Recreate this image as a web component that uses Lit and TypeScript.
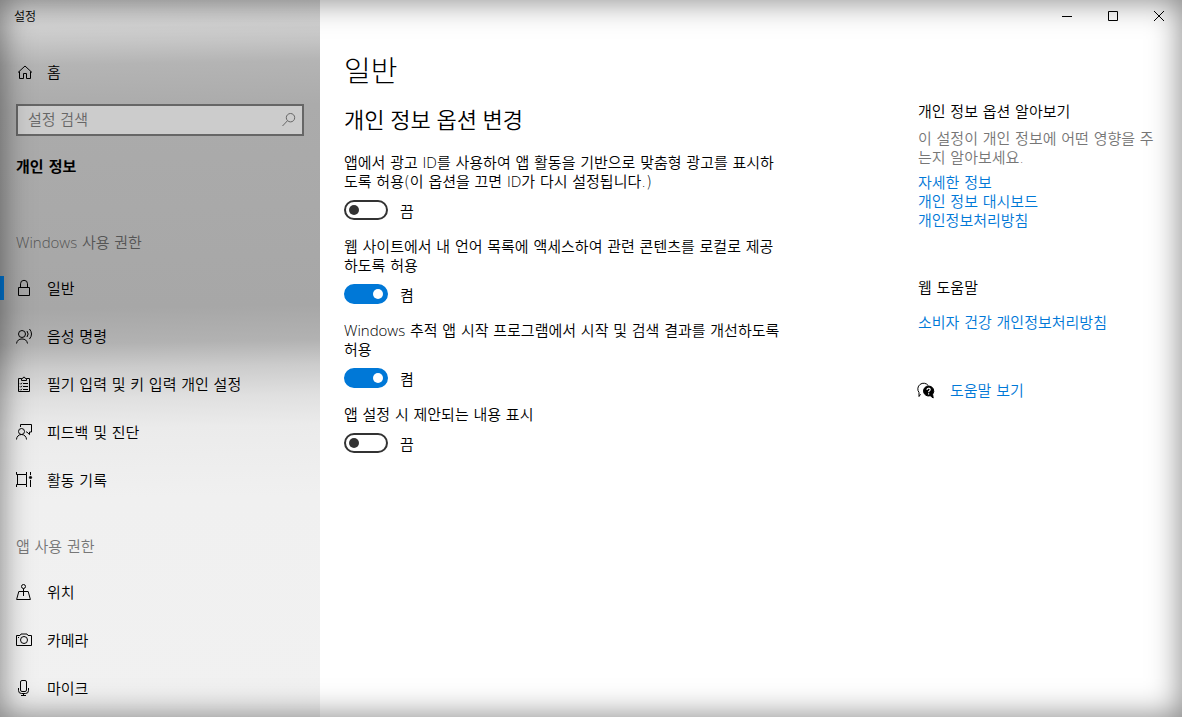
import { LitElement, html, css, svg } from "lit";
import { customElement, property, state } from "lit/decorators.js";

const icons: Record<string, unknown> = {
  home: svg`<path d="M2 8.5 9 2l7 6.5M3.5 7.5v7h4v-5h3v5h4v-7" />`,
  lock: svg`<path d="M2.5 7.5h11v8h-11zM4.5 7.5V3.8a3.5 3.5 0 0 1 7 0v3.7" />`,
  voice: svg`<circle cx="6" cy="6" r="3.5" /><path d="M.5 15.5a5.6 5.6 0 0 1 11 0M11 3a5 5 0 0 1 0 6M13.500 1a8 8 0 0 1 0 10" />`,
  clipboard: svg`<path d="M5.500 2.500h-3v13h11v-13h-3M5.500 4.500v-2h1.200a1.300 1.300 0 0 1 2.600 0h1.200v2zM7 7.500h5M7 10.500h5M7 13.500h5M4 7.500l.7.700L6 6.800M4 10.500l.7.700L6 9.800M4 13.500l.7.700L6 12.800" />`,
  feedback: svg`<circle cx="5.500" cy="7.500" r="3" /><path d="M.5 15.500a5 5 0 0 1 10 0M4.500 3V.5h11v7.500h-2v2.600l-2.600-2.600h-1" />`,
  activity: svg`<path d="M.5 0v2.500h10V0M1.500 2.500v10M10.500 2.500v10M.5 15v-2.500h10V15M14.500 0v3M14.500 8v7" /><circle cx="14.500" cy="5.500" r="1.200" fill="currentColor" stroke-width=".6" />`,
  location: svg`<circle cx="7.500" cy="2.500" r="2" /><path d="M7.500 4.500v7.500M2.800 7.500h9.400l2.200 8H.6z" />`,
  camera: svg`<path d="M.5 3.500H4l1-1.500h6l1 1.500h3.500v10H.5z" /><circle cx="8" cy="8" r="3.500" /><path d="M2 5.500h1" />`,
  mic: svg`<rect x="4.500" y=".5" width="6" height="11" rx="1.500" /><path d="M2.500 8v2.500a3 3 0 0 0 3 3h4a3 3 0 0 0 3-3V8M7.500 13.500v2M5 15.500h5" />`,
  search: svg`<circle cx="10.500" cy="5.700" r="4.200" /><path d="M7.500 8.700 2.500 14" />`,
  help: svg`<path d="M2.500 11.200 1 13.500V9.500A5.500 5.500 0 1 1 10.200 2.500" /><path d="M10.500 3a5 5 0 1 0 1.700 9.700l3 2.300-.6-3.800a5 5 0 0 0-4.100-8.200z" fill="currentColor" /><path d="M9 6.900c0-2.200 3.200-2.200 3.200-.2 0 1.200-1.600 1.200-1.600 2.500M10.600 10.200v1.200" stroke="#fff" stroke-width="1.200" />`,
  minimize: svg`<path d="M3 8.500h10" />`,
  maximize: svg`<path d="M3.500 3.500h9v9h-9z" />`,
  close: svg`<path d="m3 3 10 10M13 3 3 13" />`,
};

@customElement("ui-icon")
class UiIcon extends LitElement {
  @property() name = "";
  static styles = css`
    :host {
      display: block;
      flex: none;
      width: 16px;
      height: 16px;
    }
    .glyph {
      display: block;
      width: 16px;
      height: 16px;
      fill: none;
      stroke: currentColor;
      overflow: visible;
    }
  `;
  render() {
    return html`<svg class="glyph" viewBox="0 0 16 16" aria-hidden="true">${icons[this.name]}</svg>`;
  }
}

@customElement("toggle-option")
class ToggleOption extends LitElement {
  @property({ type: Boolean }) on = false;
  static styles = css`
    :host {
      display: block;
    }
    .caption {
      display: block;
      line-height: 19px;
    }
    .row {
      display: flex;
      align-items: center;
      gap: 12px;
      height: 20px;
      margin-top: 8px;
    }
    .switch {
      appearance: none;
      box-sizing: border-box;
      display: flex;
      align-items: center;
      width: 44px;
      height: 20px;
      margin: 0;
      padding: 0 3px;
      border: 2px solid #333;
      border-radius: 10px;
    }
    .switch::before {
      content: "";
      width: 10px;
      height: 10px;
      border-radius: 50%;
      background: #333;
    }
    .switch:checked {
      justify-content: flex-end;
      border-color: #0078d7;
      background: #0078d7;
    }
    .switch:checked::before {
      background: #fff;
    }
    .state {
      padding-top: 3px;
      line-height: 20px;
    }
  `;
  private flip(e: Event) {
    this.on = (e.target as HTMLInputElement).checked;
  }
  render() {
    return html`
      <label class="caption" for="switch"><slot></slot></label>
      <div class="row">
        <input class="switch" id="switch" type="checkbox" role="switch" .checked=${this.on} @change=${this.flip} />
        <span class="state">${this.on ? "켬" : "끔"}</span>
      </div>
    `;
  }
}

const windowsItems = [
  ["lock", "일반"],
  ["voice", "음성 명령"],
  ["clipboard", "필기 입력 및 키 입력 개인 설정"],
  ["feedback", "피드백 및 진단"],
  ["activity", "활동 기록"],
];
const appItems = [
  ["location", "위치"],
  ["camera", "카메라"],
  ["mic", "마이크"],
];

@customElement("app-root")
class AppRoot extends LitElement {
  @state() private current = "일반";

  static styles = css`
    :host {
      display: grid;
      grid-template-columns: 320px minmax(0, 1fr);
      position: relative;
      min-height: 100vh;
      background: #fff;
      color: #000;
      font: 350 15px/19px "DejaVu Sans", "Noto Sans CJK KR", sans-serif;
    }
    :host::after {
      content: "";
      position: absolute;
      inset: 0;
      pointer-events: none;
      box-shadow: inset 0 0 32px rgba(0, 0, 0, 0.5);
    }
    .latin {
      font-family: "Open Sans", "Noto Sans CJK KR", sans-serif;
      line-height: 1;
    }
    a {
      color: #0078d7;
      text-decoration: none;
    }
    .sidebar {
      background: linear-gradient(
        179deg,
        #d6d6d6 0,
        #d2d2d2 28px,
        #b4b4b4 66px,
        #ababab 110px,
        #a7a7a7 310px,
        #b2b2b2 345px,
        #cccccc 370px,
        #e0e0e0 400px,
        #ebebeb 430px,
        #f0f0f0 500px,
        #f1f1f1 100%
      );
    }
    .window-title {
      height: 32px;
      padding-left: 14px;
      font-size: 12px;
      line-height: 34px;
    }
    .item {
      display: flex;
      align-items: center;
      gap: 15px;
      height: 48px;
      padding: 0 16px;
      color: #000;
    }
    .label {
      padding-top: 2px;
    }
    .item.active {
      background: linear-gradient(#0078d7, #0078d7) left center / 4px 24px no-repeat;
    }
    .home {
      margin-top: 16px;
    }
    .search {
      display: flex;
      align-items: center;
      height: 32px;
      box-sizing: border-box;
      margin: 8px 16px 0;
      padding: 0 6px 0 10px;
      border: 2px solid #666;
      background: rgba(255, 255, 255, 0.4);
      color: #666;
    }
    .search-box {
      flex: 1;
      min-width: 0;
      padding: 0;
      border: 0;
      outline: 0;
      background: none;
      font: inherit;
    }
    .search-box::placeholder {
      color: #666;
      opacity: 1;
    }
    .category {
      margin: 21px 16px 0;
      font-size: 15px;
      line-height: 20px;
      font-weight: 700;
    }
    .group {
      margin: 0 16px;
      padding: 33px 0 11px;
      color: #555;
      font-size: 15px;
      line-height: 20px;
      font-weight: 350;
    }
    .category + .group {
      padding-top: 56px;
    }
    .group.soft {
      color: #777;
    }
    .content {
      display: flex;
      flex-direction: column;
    }
    .caption-bar {
      display: flex;
      justify-content: flex-end;
    }
    .caption-button {
      display: grid;
      place-items: center;
      width: 46px;
      height: 32px;
      padding: 0;
      border: 0;
      background: none;
      color: #000;
    }
    .page {
      display: grid;
      grid-template-columns: minmax(0, 442px) 240px;
      justify-content: space-between;
      gap: 24px;
      padding: 20px 24px 24px;
    }
    .title {
      margin: 0;
      font-size: 29px;
      line-height: 40px;
      font-weight: 300;
    }
    .subtitle {
      margin: 12px 0 0;
      font-family: "Open Sans", "Noto Sans CJK KR", sans-serif;
      font-size: 22px;
      line-height: 30px;
      font-weight: 350;
    }
    .options {
      display: grid;
      gap: 18px;
      margin-top: 20px;
    }
    .options > :last-child {
      margin-top: 0;
    }
    .aside {
      padding-top: 51px;
    }
    .aside-title {
      margin: 0;
      font-size: 15px;
      line-height: 19px;
      font-weight: 350;
    }
    .note {
      margin: 8px 0 6px;
      color: #767676;
    }
    .links {
      display: grid;
      justify-items: start;
    }
    .web {
      margin: 48px 0 16px;
    }
    .help {
      display: flex;
      align-items: center;
      gap: 16px;
      margin-top: 47px;
    }
    .help-icon {
      color: #000;
    }
  `;

  private item([icon, label]: string[]) {
    const active = label === this.current;
    return html`<a
      class="item ${active ? "active" : ""}"
      href="#"
      aria-current=${active ? "page" : "false"}
      @click=${(e: Event) => {
        e.preventDefault();
        this.current = label;
      }}
      ><ui-icon name=${icon}></ui-icon><span class="label">${label}</span></a
    >`;
  }

  render() {
    return html`
      <nav class="sidebar">
        <div class="window-title">설정</div>
        <a class="item home" href="#"><ui-icon name="home"></ui-icon><span class="label">홈</span></a>
        <label class="search">
          <input class="search-box" type="text" placeholder="설정 검색" aria-label="설정 검색" />
          <ui-icon name="search"></ui-icon>
        </label>
        <h2 class="category">개인 정보</h2>
        <h3 class="group"><span class="latin">Windows</span> 사용 권한</h3>
        ${windowsItems.map((i) => this.item(i))}
        <h3 class="group soft">앱 사용 권한</h3>
        ${appItems.map((i) => this.item(i))}
      </nav>
      <div class="content">
        <div class="caption-bar">
          <button class="caption-button" aria-label="최소화"><ui-icon name="minimize"></ui-icon></button>
          <button class="caption-button" aria-label="최대화"><ui-icon name="maximize"></ui-icon></button>
          <button class="caption-button" aria-label="닫기"><ui-icon name="close"></ui-icon></button>
        </div>
        <div class="page">
          <main>
            <h1 class="title">일반</h1>
            <h2 class="subtitle">개인 정보 옵션 변경</h2>
            <div class="options">
              <toggle-option
                >앱에서 광고 <span class="latin">ID</span>를 사용하여 앱 활동을 기반으로 맞춤형 광고를 표시하<br />도록
                허용(이 옵션을 끄면 <span class="latin">ID</span>가 다시 설정됩니다.)</toggle-option
              >
              <toggle-option on
                >웹 사이트에서 내 언어 목록에 액세스하여 관련 콘텐츠를 로컬로 제공<br />하도록 허용</toggle-option
              >
              <toggle-option on
                ><span class="latin">Windows</span> 추적 앱 시작 프로그램에서 시작 및 검색 결과를 개선하도록<br />허용</toggle-option
              >
              <toggle-option>앱 설정 시 제안되는 내용 표시</toggle-option>
            </div>
          </main>
          <aside class="aside">
            <h2 class="aside-title">개인 정보 옵션 알아보기</h2>
            <p class="note">이 설정이 개인 정보에 어떤 영향을 주<br />는지 알아보세요.</p>
            <div class="links">
              <a href="#">자세한 정보</a>
              <a href="#">개인 정보 대시보드</a>
              <a href="#">개인정보처리방침</a>
            </div>
            <h2 class="aside-title web">웹 도움말</h2>
            <div class="links"><a href="#">소비자 건강 개인정보처리방침</a></div>
            <a class="help" href="#"><ui-icon class="help-icon" name="help"></ui-icon><span class="label">도움말 보기</span></a>
          </aside>
        </div>
      </div>
    `;
  }
}
